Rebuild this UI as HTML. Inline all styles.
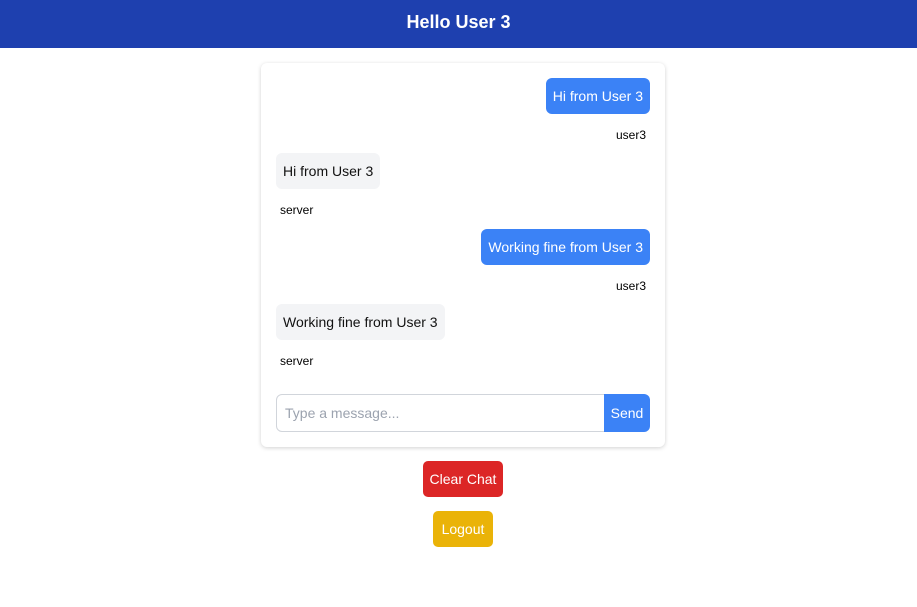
<!DOCTYPE html>
<html><head><meta charset="utf-8"><style>
*{box-sizing:border-box;margin:0;padding:0}
body{width:917px;height:607px;background:#fff;font-family:"Liberation Sans",sans-serif;position:relative;overflow:hidden}
.hdr{position:absolute;left:0;top:0;width:917px;height:48px;background:#1e40af;color:#fff;font-weight:bold;font-size:18px;text-align:center;line-height:44px}
.card{position:absolute;left:261px;top:63px;width:404px;height:384px;background:#fff;border-radius:6px;box-shadow:0 1px 4px rgba(0,0,0,.18)}
.b{position:absolute;height:36px;line-height:36px;font-size:14px;padding:0 7px;border-radius:6px;white-space:nowrap}
.me{background:#3b82f6;color:#fff;right:15px}
.sv{background:#f3f4f6;color:#111;left:15px}
.l{position:absolute;font-size:12px;color:#000}
.lr{right:19px}.ll{left:19px}
.inp{position:absolute;left:15px;top:331px;width:329px;height:38px;border:1px solid #d1d5db;border-radius:6px 0 0 6px;font-size:14px;color:#9ca3af;line-height:36px;padding-left:8px}
.send{position:absolute;left:343px;top:331px;width:46px;height:38px;background:#3b82f6;color:#fff;border-radius:0 6px 6px 0;font-size:14px;line-height:38px;text-align:center}
.btn{position:absolute;height:36px;line-height:36px;color:#fff;font-size:14px;text-align:center;border-radius:5px}
</style></head><body>
<div class="hdr">Hello User 3</div>
<div class="card">
<div class="b me" style="top:15px">Hi from User 3</div>
<div class="l lr" style="top:65px">user3</div>
<div class="b sv" style="top:90px">Hi from User 3</div>
<div class="l ll" style="top:140px">server</div>
<div class="b me" style="top:166px">Working fine from User 3</div>
<div class="l lr" style="top:216px">user3</div>
<div class="b sv" style="top:241px">Working fine from User 3</div>
<div class="l ll" style="top:291px">server</div>
<div class="inp">Type a message...</div>
<div class="send">Send</div>
</div>
<div class="btn" style="left:423px;top:461px;width:80px;background:#dc2626">Clear Chat</div>
<div class="btn" style="left:433px;top:511px;width:60px;background:#eab308">Logout</div>
</body></html>
